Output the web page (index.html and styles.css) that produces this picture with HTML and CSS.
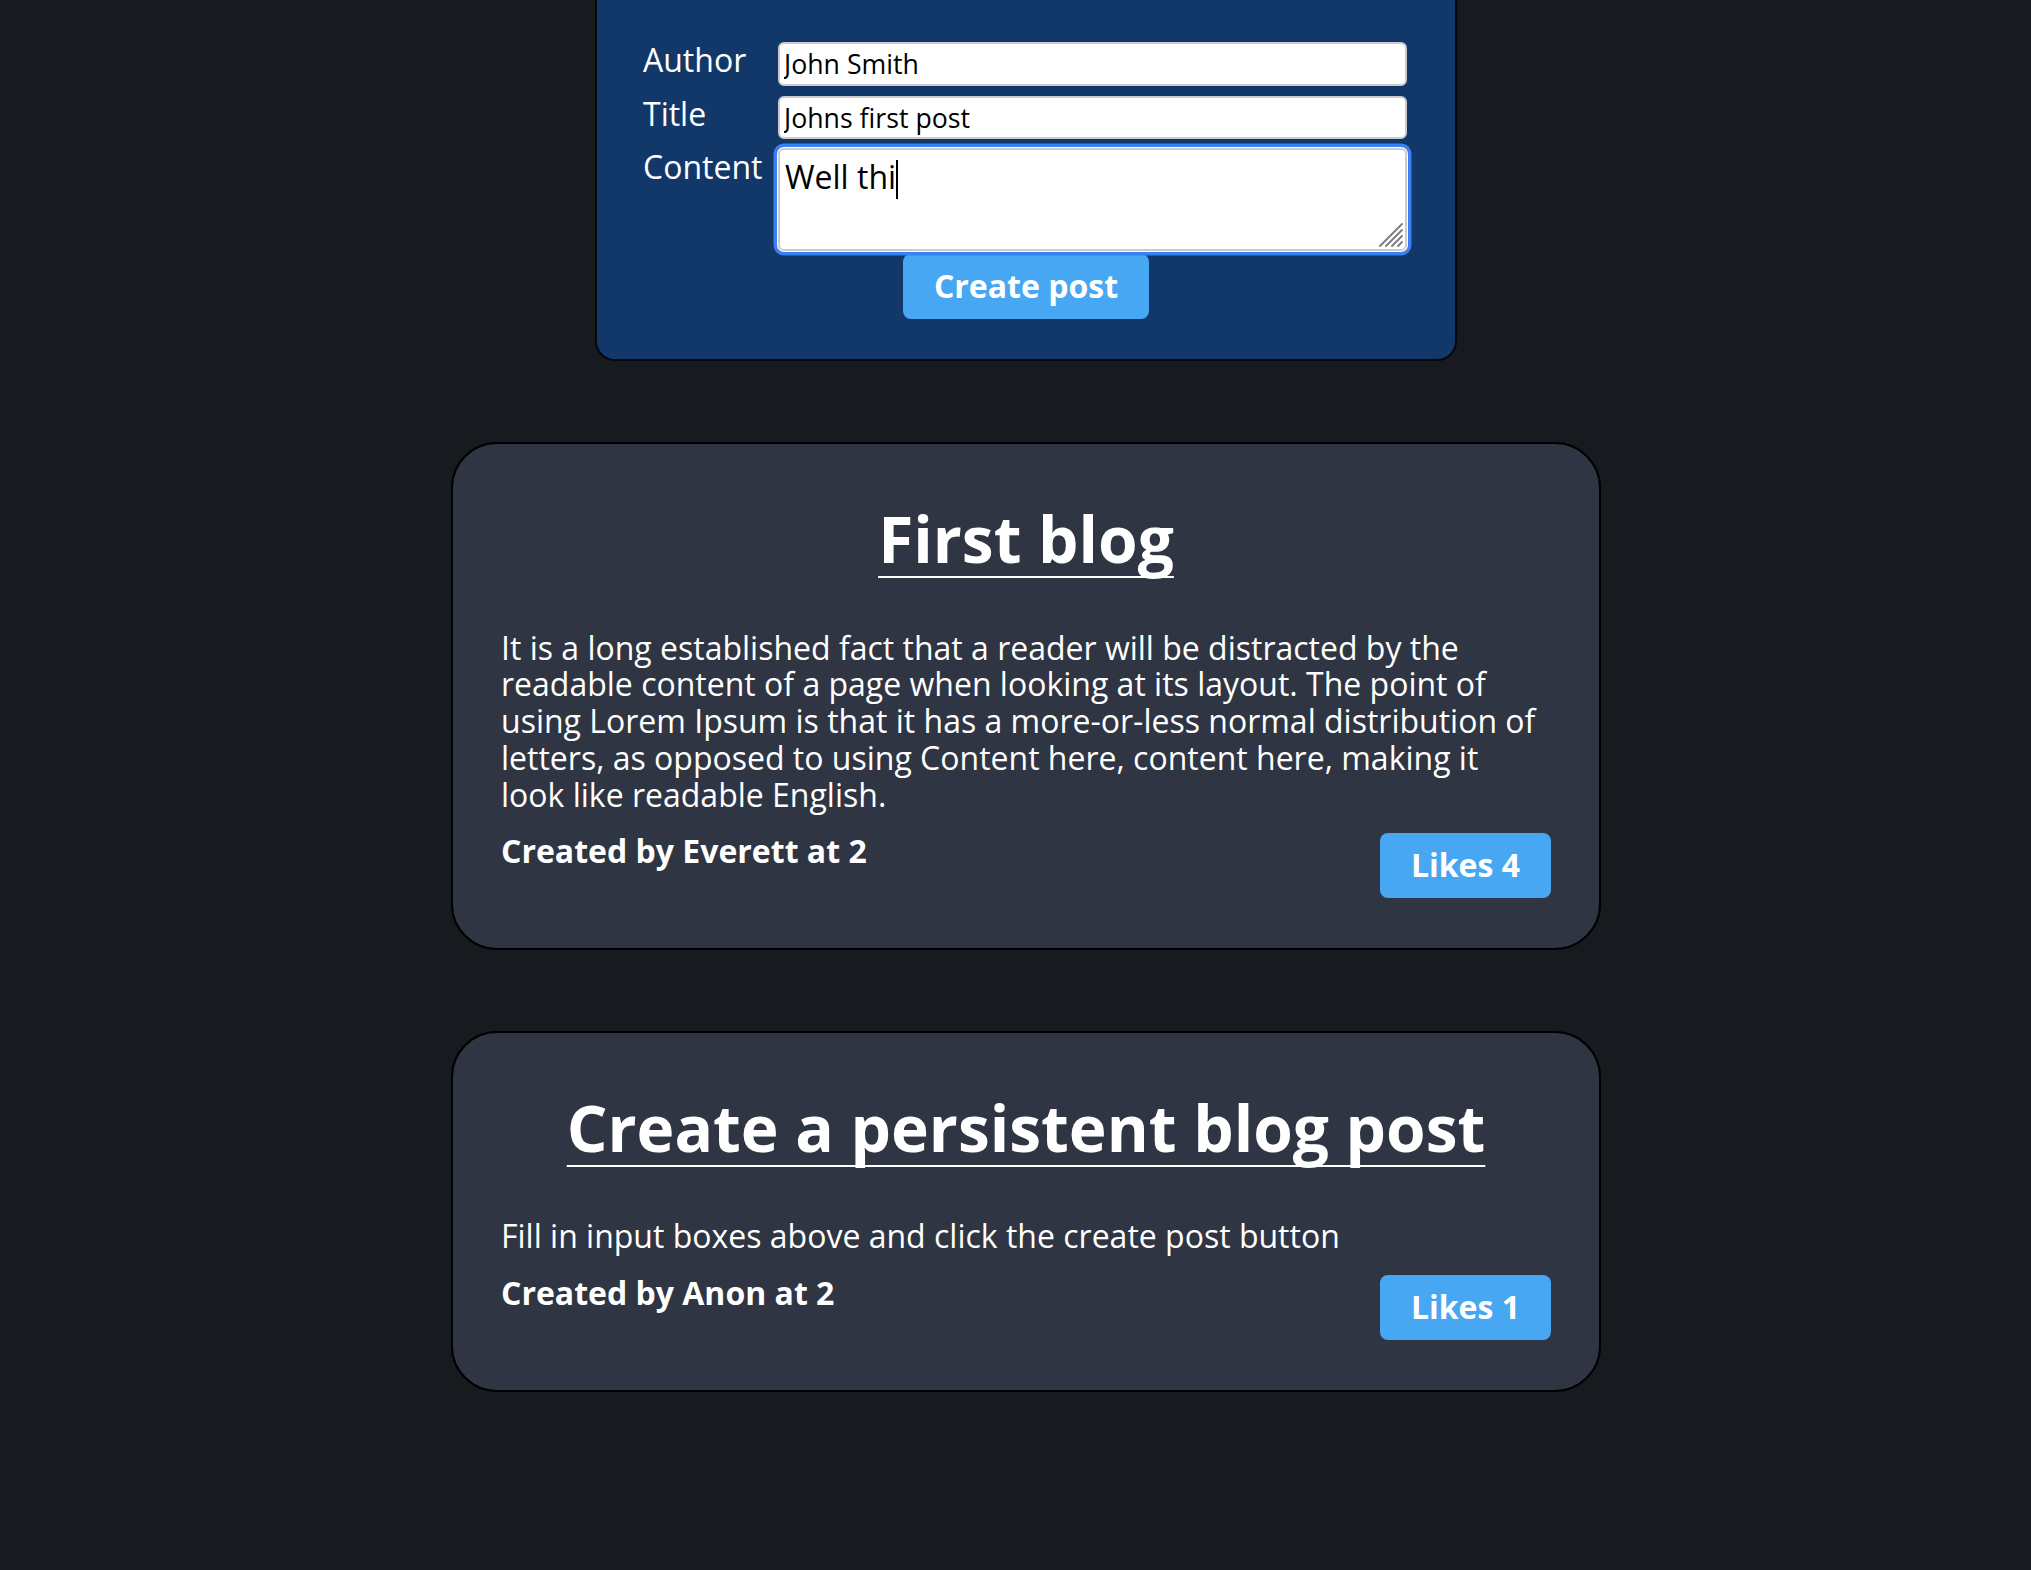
FILE: index.html
```html
<!DOCTYPE html>
<html lang="en">
<head>
<meta charset="utf-8">
<title>Blog</title>
<link rel="stylesheet" href="styles.css">
</head>
<body>
<main class="page">
  <form class="form-box">
    <div class="form-grid">
      <label class="label" for="author">Author</label>
      <input class="field" id="author" type="text" value="John Smith">
      <label class="label" for="title">Title</label>
      <input class="field" id="title" type="text" value="Johns first post">
      <label class="label" for="content">Content</label>
      <div class="area-wrap">
        <textarea class="area" id="content">Well thi</textarea>
        <span class="caret"></span>
        <svg class="grip" width="24" height="24" viewBox="0 0 24 24"><path d="M23 1 L1 23 M23 7 L7 23 M23 13 L13 23 M23 19 L19 23" stroke="#7a7a7a" stroke-width="1.8" stroke-linecap="round"/></svg>
      </div>
    </div>
    <button class="btn create" type="button">Create post</button>
  </form>

  <article class="card">
    <h1 class="card-title">First blog</h1>
    <p class="card-body">It is a long established fact that a reader will be distracted by the readable content of a page when looking at its layout. The point of using Lorem Ipsum is that it has a more-or-less normal distribution of letters, as opposed to using Content here, content here, making it look like readable English.</p>
    <div class="card-foot">
      <span class="byline">Created by Everett at 2</span>
      <button class="btn likes" type="button">Likes 4</button>
    </div>
  </article>

  <article class="card">
    <h1 class="card-title">Create a persistent blog post</h1>
    <p class="card-body">Fill in input boxes above and click the create post button</p>
    <div class="card-foot">
      <span class="byline">Created by Anon at 2</span>
      <button class="btn likes" type="button">Likes 1</button>
    </div>
  </article>
</main>
</body>
</html>
```
FILE: styles.css
```css
* { box-sizing: border-box; }

html, body {
  margin: 0;
  background: #171a1f;
}

body {
  font-family: "Open Sans", "Noto Sans", sans-serif;
  color: #ffffff;
  min-height: 1570px;
}

.page {
  display: flex;
  flex-direction: column;
  align-items: center;
  padding-left: 21px;
  padding-bottom: 120px;
}

.form-box {
  width: 862px;
  margin-top: -20px;
  background: #12386a;
  border: 2px solid #05080c;
  border-radius: 20px;
  padding: 56px 46px 40.5px;
  display: flex;
  flex-direction: column;
  align-items: center;
}

.form-grid {
  display: grid;
  grid-template-columns: 118px 629px;
  column-gap: 17px;
  align-items: start;
  align-self: stretch;
}

.label {
  font-size: 32px;
  line-height: 43.6px;
  white-space: nowrap;
}

.field {
  height: 43.5px;
  margin: 4px 0 6px;
  border: 2px solid #cbcbcb;
  border-radius: 6px;
  background: #ffffff;
  padding: 0 4px;
  font-family: "Open Sans", sans-serif;
  font-size: 26.7px;
  color: #000000;
  outline: none;
}

.area-wrap {
  position: relative;
  margin-top: 3px;
  height: 103px;
}

.area {
  display: block;
  width: 100%;
  height: 103px;
  border: 2px solid #cbcbcb;
  border-radius: 6px;
  background: #ffffff;
  padding: 5px 5px;
  font-family: "Open Sans", sans-serif;
  font-size: 32px;
  line-height: 43.6px;
  color: #000000;
  resize: none;
  outline: none;
  box-shadow: 0 0 0 1px #ffffff, 0 0 0 4.5px #3a80f2;
}

.caret {
  position: absolute;
  left: 118px;
  top: 12px;
  width: 2px;
  height: 39px;
  background: #000000;
}

.grip {
  position: absolute;
  right: 4px;
  bottom: 4px;
}

.btn {
  border: none;
  background: #48a7f2;
  color: #ffffff;
  font-family: "Open Sans", sans-serif;
  font-weight: 700;
  font-size: 32px;
  line-height: 44px;
  height: 65px;
  padding: 0 31px;
  border-radius: 8px;
}

.create {
  margin-top: 2.5px;
}

.card {
  width: 1150px;
  margin-top: 81px;
  background: #2f3542;
  border: 2px solid #000000;
  border-radius: 46px;
  padding: 48px 48px 50px;
}

.card-title {
  margin: 3px 0 0;
  text-align: center;
  font-size: 64px;
  font-weight: 700;
  line-height: 87px;
  text-decoration: underline;
  text-decoration-thickness: 2px;
  text-underline-offset: 13px;
  text-decoration-skip-ink: none;
}

.card-body {
  margin: 47.5px 0 0;
  padding-right: 8px;
  font-size: 32px;
  line-height: 36.8px;
}

.card-foot {
  display: flex;
  justify-content: space-between;
  align-items: flex-start;
  margin-top: 19.5px;
}

.byline {
  font-size: 32px;
  font-weight: 700;
  line-height: 36.8px;
}
```
